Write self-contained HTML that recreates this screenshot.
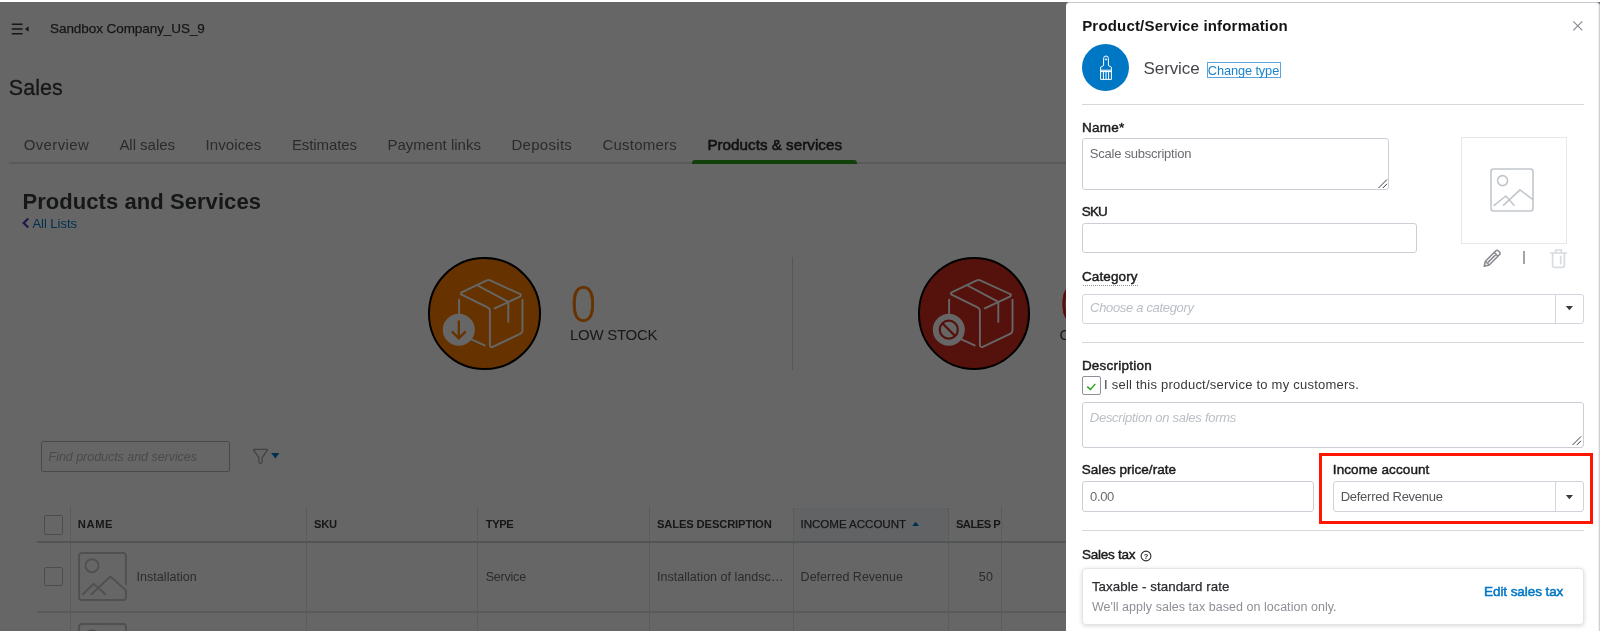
<!DOCTYPE html>
<html lang="en">
<head>
<meta charset="utf-8">
<title>Products and Services</title>
<style>
*{box-sizing:border-box;margin:0;padding:0}
html,body{width:1600px;height:631px;overflow:hidden;background:#fff}
body{position:relative;font-family:"Liberation Sans",sans-serif}
.layer{position:absolute;left:0;top:0;width:1600px;height:631px;overflow:hidden;will-change:transform}
.a{position:absolute;display:block}
.t{position:absolute;white-space:nowrap;display:block}
#overlay{position:absolute;left:0;top:2px;width:1600px;height:629px;background:rgba(0,0,0,.6)}
#panelbg{position:absolute;left:1066px;top:2px;width:534px;height:640px;background:#fff;border-top:1px solid #c6cacf;border-right:1px solid #cdd0d5;box-shadow:inset -1px 0 0 #eff0f2;border-radius:4px 4px 0 0}
.vd{position:absolute;top:508px;height:130px;width:0;border-left:1px dotted #cdd0d5}
.hl{position:absolute;background:#d4d7dc}
.inp{position:absolute;border:1px solid #cbcfd5;border-radius:3px;background:#fff}
.cb{position:absolute;width:19px;height:20px;border:1px solid #babec5;border-radius:2px;background:#fff}
</style>
</head>
<body>
<!-- ================= underlying page ================= -->
<div class="layer" id="page">
  <!-- nav toggle -->
  <svg class="a" style="left:10px;top:20px" width="22" height="18" viewBox="0 0 22 18">
    <g stroke="#393a3d" stroke-width="1.4" fill="none"><path d="M1.8 4.2h10.8M1.8 9h10.8M1.8 13.8h10.8"/></g>
    <path d="M18.6 6.2v5.6L15 9z" fill="#393a3d"/>
  </svg>
  <!-- tab rule + selected bar -->
  <div class="hl" style="left:9px;top:162px;width:1591px;height:2px;background:#dfe2e6"></div>
  <div class="a" style="left:692px;top:160px;width:165px;height:4px;background:#2ca01c;border-radius:3px 3px 0 0"></div>
  <!-- all lists chevron -->
  <svg class="a" style="left:21px;top:217px" width="10" height="12" viewBox="0 0 10 12"><path d="M7.3 1.6L2.6 6l4.7 4.4" fill="none" stroke="#3a3ab8" stroke-width="2"/></svg>

  <!-- low stock circle -->
  <div class="a" style="left:428px;top:257px;width:112.5px;height:112.5px;border-radius:50%;background:#ff8000;border:2px solid #000"></div>
  <svg class="a" style="left:428.2px;top:257.2px" width="112" height="112" viewBox="0 0 112 112">
    <g fill="none" stroke="#fff" stroke-width="1.9" stroke-linecap="round" stroke-linejoin="round">
      <path d="M66.7 51.3L92 39.6a1.4 1.4 0 0 0 0-2.6L62.2 23.4a4 4 0 0 0-3.4 0L33.6 35.4a1.2 1.2 0 0 0 0 2.2L59.6 50.4a4 4 0 0 1 2.3 3.6V88a2 2 0 0 0 2.9 1.9L92.6 76.6a3.4 3.4 0 0 0 1.9-3V42.8"/>
      <path d="M49.6 28.5L80.3 44.9V64.9"/>
      <path d="M31.1 42.8V56.5"/>
      <path d="M43.9 82.7L56.7 88.4"/>
    </g>
    <circle cx="30.8" cy="72.7" r="16" fill="#fff"/>
    <path d="M30.8 63.4V81M23.9 74.4l6.9 6.9 6.9-6.9" fill="none" stroke="#ff8000" stroke-width="2.3"/>
  </svg>
  <div class="hl" style="left:792px;top:257px;width:1px;height:113px"></div>
  <!-- out of stock circle -->
  <div class="a" style="left:917.8px;top:257px;width:112.5px;height:112.5px;border-radius:50%;background:#d52b1e;border:2px solid #000"></div>
  <svg class="a" style="left:918px;top:257.2px" width="112" height="112" viewBox="0 0 112 112">
    <g fill="none" stroke="#fff" stroke-width="1.9" stroke-linecap="round" stroke-linejoin="round">
      <path d="M66.7 51.3L92 39.6a1.4 1.4 0 0 0 0-2.6L62.2 23.4a4 4 0 0 0-3.4 0L33.6 35.4a1.2 1.2 0 0 0 0 2.2L59.6 50.4a4 4 0 0 1 2.3 3.6V88a2 2 0 0 0 2.9 1.9L92.6 76.6a3.4 3.4 0 0 0 1.9-3V42.8"/>
      <path d="M49.6 28.5L80.3 44.9V64.9"/>
      <path d="M31.1 42.8V56.5"/>
      <path d="M43.9 82.7L56.7 88.4"/>
    </g>
    <circle cx="30.8" cy="72.7" r="16" fill="#fff"/>
    <circle cx="30.8" cy="72.7" r="9" fill="none" stroke="#d52b1e" stroke-width="2.2"/>
    <path d="M24.4 66.3l12.8 12.8" stroke="#d52b1e" stroke-width="2.2"/>
  </svg>

  <!-- search + filter -->
  <div class="a" style="left:40.5px;top:441px;width:189.5px;height:31px;border:1px solid #b2b6bc;border-radius:2px"></div>
  <svg class="a" style="left:251px;top:446.300px" width="32" height="20" viewBox="0 0 32 20">
    <path d="M3.200 3.300h12.600a0.600 0.600 0 0 1 0.500 0.950L11.100 11.700v4a1.600 1.600 0 0 1-3.200 0v-4L2.700 4.250a0.600 0.600 0 0 1 0.500-0.950z" fill="none" stroke="#a6a9af" stroke-width="1.350" stroke-linejoin="round"/>
    <path d="M20.200 7.100h8.200l-4.100 5.300z" fill="#0079c8"/>
  </svg>

  <!-- table -->
  <div class="a" style="left:794px;top:508px;width:155px;height:33px;background:#f6f7f9"></div>
  <div class="vd" style="left:70px"></div>
  <div class="vd" style="left:306px"></div>
  <div class="vd" style="left:477px"></div>
  <div class="vd" style="left:649px"></div>
  <div class="vd" style="left:793px"></div>
  <div class="vd" style="left:948px"></div>
  <div class="vd" style="left:1001px"></div>
  <div class="a" style="left:37px;top:541px;width:1563px;height:2px;background:#cfd3d8"></div>
  <div class="a" style="left:37px;top:611px;width:1563px;height:2px;background:#dfe2e6"></div>
  <div class="cb" style="left:44px;top:515px"></div>
  <div class="cb" style="left:44px;top:567px;height:19px"></div>
  <svg class="a" style="left:912px;top:521px" width="8" height="6" viewBox="0 0 8 6"><path d="M0.2 5L3.6 0.8 7 5z" fill="#0077c5"/></svg>
  <!-- row thumbnails -->
  <svg class="a" style="left:78px;top:552px" width="49" height="49" viewBox="0 0 49 49">
    <g fill="none" stroke="#c3c7ce" stroke-width="1.9" stroke-linejoin="round" stroke-linecap="round">
      <path d="M47.9 32.400V3.600a2.600 2.600 0 0 0-2.600-2.600H3.700a2.600 2.600 0 0 0-2.600 2.600v41.800a2.600 2.600 0 0 0 2.600 2.600h41.600a2.600 2.600 0 0 0 2.600-2.600V38.400"/>
      <circle cx="14" cy="13.700" r="6.500"/>
      <path d="M4.800 42.200L15.700 31.700l11.600 10.500M13.400 42.200L32.400 24.500l15.500 13.900"/>
    </g>
  </svg>
  <svg class="a" style="left:78px;top:622.500px" width="49" height="49" viewBox="0 0 49 49">
    <g fill="none" stroke="#c3c7ce" stroke-width="1.9" stroke-linejoin="round" stroke-linecap="round">
      <path d="M47.9 32.400V3.600a2.600 2.600 0 0 0-2.600-2.600H3.700a2.600 2.600 0 0 0-2.600 2.600v41.800a2.600 2.600 0 0 0 2.600 2.600h41.600a2.600 2.600 0 0 0 2.600-2.600V38.400"/>
      <circle cx="14" cy="13.700" r="6.500"/>
    </g>
  </svg>
<span class="t" id="co" style="left:50.00px;top:22.40px;font-size:13.5px;line-height:13.5px;color:#393a3d;letter-spacing:-0.067px;-webkit-text-stroke:0.25px #393a3d;">Sandbox Company_US_9</span>
<span class="t" id="sales" style="left:8.80px;top:77.61px;font-size:21.5px;line-height:21.5px;color:#393a3d;letter-spacing:0.045px;-webkit-text-stroke:0.3px #393a3d;">Sales</span>
<span class="t" id="tab0" style="left:23.65px;top:137.01px;font-size:15px;line-height:15px;color:#6b6c72;letter-spacing:0.378px;">Overview</span>
<span class="t" id="tab1" style="left:119.40px;top:137.01px;font-size:15px;line-height:15px;color:#6b6c72;letter-spacing:-0.031px;">All sales</span>
<span class="t" id="tab2" style="left:205.40px;top:137.01px;font-size:15px;line-height:15px;color:#6b6c72;letter-spacing:0.116px;">Invoices</span>
<span class="t" id="tab3" style="left:291.90px;top:137.01px;font-size:15px;line-height:15px;color:#6b6c72;letter-spacing:-0.089px;">Estimates</span>
<span class="t" id="tab4" style="left:387.40px;top:137.01px;font-size:15px;line-height:15px;color:#6b6c72;letter-spacing:0.018px;">Payment links</span>
<span class="t" id="tab5" style="left:511.40px;top:137.01px;font-size:15px;line-height:15px;color:#6b6c72;letter-spacing:0.299px;">Deposits</span>
<span class="t" id="tab6" style="left:602.40px;top:137.01px;font-size:15px;line-height:15px;color:#6b6c72;letter-spacing:0.243px;">Customers</span>
<span class="t" id="tabsel" style="left:707.40px;top:137.01px;font-size:15.2px;line-height:15.2px;color:#2b2c2f;letter-spacing:0.021px;-webkit-text-stroke:0.55px #2b2c2f;">Products &amp; services</span>
<span class="t" id="h1" style="left:22.40px;top:191.00px;font-size:22px;line-height:22px;color:#393a3d;font-weight:700;letter-spacing:0.067px;">Products and Services</span>
<span class="t" id="alllists" style="left:32.40px;top:216.50px;font-size:13px;line-height:13px;color:#0077c5;letter-spacing:-0.023px;">All Lists</span>
<span class="t" id="zero1" style="left:569.10px;top:282.71px;font-size:45.5px;line-height:45.5px;color:#ff8000;letter-spacing:0.000px;-webkit-text-stroke:0.8px #ff8000;font-family:DejaVu Sans Light,DejaVu Sans,sans-serif;font-weight:200;">0</span>
<span class="t" id="low" style="left:570.00px;top:326.70px;font-size:15px;line-height:15px;color:#3f4044;letter-spacing:-0.276px;">LOW STOCK</span>
<span class="t" id="zero2" style="left:1058.70px;top:282.71px;font-size:45.5px;line-height:45.5px;color:#d52b1e;letter-spacing:0.000px;-webkit-text-stroke:0.8px #d52b1e;font-family:DejaVu Sans Light,DejaVu Sans,sans-serif;font-weight:200;">0</span>
<span class="t" id="out" style="left:1059.60px;top:326.70px;font-size:15px;line-height:15px;color:#3f4044;letter-spacing:-0.136px;">OUT OF STOCK</span>
<span class="t" id="find" style="left:48.60px;top:450.51px;font-size:12.5px;line-height:12.5px;color:#b4b8be;font-style:italic;letter-spacing:-0.039px;">Find products and services</span>
<span class="t" id="thname" style="left:77.80px;top:519.00px;font-size:11.2px;line-height:11.2px;color:#393a3d;font-weight:700;letter-spacing:0.585px;">NAME</span>
<span class="t" id="thsku" style="left:314.00px;top:519.00px;font-size:11.2px;line-height:11.2px;color:#393a3d;font-weight:700;letter-spacing:-0.250px;">SKU</span>
<span class="t" id="thtype" style="left:485.70px;top:519.00px;font-size:11.2px;line-height:11.2px;color:#393a3d;font-weight:700;letter-spacing:-0.381px;">TYPE</span>
<span class="t" id="thdesc" style="left:657.00px;top:519.00px;font-size:11.2px;line-height:11.2px;color:#393a3d;font-weight:700;letter-spacing:-0.132px;">SALES DESCRIPTION</span>
<span class="t" id="thinc" style="left:800.60px;top:518.01px;font-size:11.6px;line-height:11.6px;color:#393a3d;letter-spacing:-0.065px;-webkit-text-stroke:0.25px #393a3d;">INCOME ACCOUNT</span>
<span class="t" id="thsp" style="left:955.90px;top:519.00px;font-size:11.2px;line-height:11.2px;color:#393a3d;font-weight:700;letter-spacing:-0.504px;">SALES P</span>
<span class="t" id="r1name" style="left:136.50px;top:571.10px;font-size:12.5px;line-height:12.5px;color:#6b6c72;letter-spacing:0.046px;">Installation</span>
<span class="t" id="r1type" style="left:485.70px;top:571.01px;font-size:12.5px;line-height:12.5px;color:#6b6c72;letter-spacing:-0.213px;">Service</span>
<span class="t" id="r1desc" style="left:657.00px;top:571.01px;font-size:12.5px;line-height:12.5px;color:#6b6c72;letter-spacing:0.028px;">Installation of landsc…</span>
<span class="t" id="r1inc" style="left:800.60px;top:571.01px;font-size:12.5px;line-height:12.5px;color:#6b6c72;letter-spacing:0.016px;">Deferred Revenue</span>
<span class="t" id="r1p" style="left:978.70px;top:571.01px;font-size:12.5px;line-height:12.5px;color:#6b6c72;letter-spacing:0.396px;">50</span>
</div>

<!-- ================= dimming overlay ================= -->
<div id="overlay"></div>

<!-- ================= slide-in panel ================= -->
<div id="panelbg"></div>
<div class="layer" id="panel">
  <!-- close -->
  <svg class="a" style="left:1572px;top:20px" width="12" height="12" viewBox="0 0 12 12"><path d="M1.3 1.3l9 9M10.3 1.3l-9 9" stroke="#85888e" stroke-width="1.15" fill="none"/></svg>
  <!-- service badge -->
  <div class="a" style="left:1082px;top:44px;width:47.4px;height:47.4px;border-radius:50%;background:#0077c5"></div>
  <svg class="a" style="left:1098.2px;top:54.1px" width="16" height="28" viewBox="0 0 16 28">
    <g fill="none" stroke="#fff" stroke-width="1" stroke-linejoin="round">
      <path d="M5.6 11.6V4.4a2.4 2.4 0 0 1 4.8 0v7.2l3 1.6v12.2H2.6V13.200z"/>
      <path d="M2.6 17.6h10.800M5.4 17.800v7.400M8 17.800v7.400M10.600 17.800v7.400"/>
      <circle cx="8" cy="5.400" r="0.700"/>
    </g>
    <rect x="3" y="15.600" width="10" height="2.200" fill="#fff" opacity=".75"/>
  </svg>
  <div class="a" style="left:1207px;top:62px;width:74px;height:16px;border:1px solid #5aa5de"></div>
  <div class="hl" style="left:1082px;top:103.500px;width:501.500px;height:1px;background:#d4d7dc"></div>

  <!-- name / sku -->
  <div class="inp" style="left:1082px;top:138px;width:307px;height:52px"></div>
  <svg class="a" style="left:1377px;top:178px" width="11" height="11" viewBox="0 0 11 11"><path d="M1.500 10L10 1.500M5.800 10L10 5.800" stroke="#393a3d" stroke-width="1" fill="none"/></svg>
  <div class="inp" style="left:1082px;top:222.500px;width:334.500px;height:30.500px"></div>
  <!-- image picker -->
  <div class="a" style="left:1461px;top:137px;width:106px;height:107px;border:1px solid #e6e8eb"></div>
  <svg class="a" style="left:1490px;top:168.300px" width="44" height="44" viewBox="0 0 44 44">
    <g fill="none" stroke="#c2c6cc" stroke-width="1.600" stroke-linejoin="round" stroke-linecap="round">
      <rect x="1" y="1" width="42" height="42" rx="2.500"/>
      <circle cx="12.600" cy="12.600" r="5"/>
      <path d="M4.200 37.400L15.800 28l8.200 9.200M13.600 37.200L30 21.800l12.600 9.600"/>
    </g>
  </svg>
  <svg class="a" style="left:1482px;top:249px" width="20" height="19" viewBox="0 0 20 19">
    <g fill="none" stroke="#87898f" stroke-width="1.500" stroke-linejoin="round">
      <path d="M2.200 17.200l1.200-5L13.600 2a2 2 0 0 1 2.800 0l1 1a2 2 0 0 1 0 2.800L7.200 16z"/>
      <path d="M3.400 12.200l3.800 3.800M12.200 3.400l3.800 3.800M6 13.400l8-8"/>
    </g>
  </svg>
  <div class="a" style="left:1523px;top:251px;width:2px;height:13px;background:#a3a4a8"></div>
  <svg class="a" style="left:1549px;top:248px" width="19" height="21" viewBox="0 0 19 21">
    <g fill="none" stroke="#d8dbe0" stroke-width="1.700" stroke-linejoin="round" stroke-linecap="round">
      <path d="M1.600 5h15.800M6.600 4.600V2h5.800v2.600M3.600 5.200v12.600a1.600 1.600 0 0 0 1.600 1.600h8.600a1.600 1.600 0 0 0 1.600-1.600V5.200M11.700 8.600v7"/>
    </g>
  </svg>
  <!-- category -->
  <div class="a" style="left:1082.500px;top:284.500px;width:55px;height:0;border-top:1px dotted #8d9096"></div>
  <div class="inp" style="left:1082px;top:293.500px;width:501.500px;height:30px;border-color:#d3d6dc"></div>
  <div class="a" style="left:1555px;top:294px;width:1px;height:29px;background:#d3d6dc"></div>
  <svg class="a" style="left:1565px;top:305px" width="9" height="6" viewBox="0 0 9 6"><path d="M0.800 1h7.200L4.400 5.200z" fill="#393a3d"/></svg>
  <div class="hl" style="left:1082px;top:342px;width:501.500px;height:1px;background:#d4d7dc"></div>

  <!-- description -->
  <div class="cb" style="left:1082px;top:376px;height:19px;border-color:#8d9096"></div>
  <svg class="a" style="left:1086px;top:381px" width="11" height="10" viewBox="0 0 11 10"><path d="M1.2 5.600l3.300 2.800L9.300 2.900" fill="none" stroke="#2ca01c" stroke-width="1.400"/></svg>
  <div class="inp" style="left:1082px;top:402px;width:501.500px;height:45.500px"></div>
  <svg class="a" style="left:1571px;top:435px" width="11" height="11" viewBox="0 0 11 11"><path d="M1.500 10L10 1.500M5.800 10L10 5.800" stroke="#393a3d" stroke-width="1" fill="none"/></svg>

  <!-- price / income -->
  <div class="inp" style="left:1082px;top:481px;width:231.500px;height:30.500px"></div>
  <div class="a" style="left:1319px;top:453px;width:274px;height:71px;border:3px solid #ff1600"></div>
  <div class="inp" style="left:1333px;top:481px;width:250.500px;height:30.500px;border-color:#d0d3d9"></div>
  <div class="a" style="left:1555px;top:481.500px;width:1px;height:29.500px;background:#d3d6dc"></div>
  <svg class="a" style="left:1565px;top:493.500px" width="9" height="6" viewBox="0 0 9 6"><path d="M0.800 1h7.200L4.400 5.200z" fill="#393a3d"/></svg>
  <div class="hl" style="left:1082px;top:530px;width:501.500px;height:1px;background:#d4d7dc"></div>

  <!-- sales tax -->
  <svg class="a" style="left:1140px;top:550.200px" width="12" height="12" viewBox="0 0 12 12"><circle cx="6" cy="6" r="4.900" fill="none" stroke="#2b2c2f" stroke-width="1.100"/><text x="6" y="8.600" font-size="7.500" font-weight="700" font-family="Liberation Sans, sans-serif" text-anchor="middle" fill="#2b2c2f">?</text></svg>
  <div class="a" style="left:1082px;top:567.500px;width:501.500px;height:57.500px;border:1px solid #e3e5e8;border-radius:4px;box-shadow:0 1px 4px rgba(0,0,0,.16);background:#fff"></div>
<span class="t" id="ptitle" style="left:1082.20px;top:18.01px;font-size:15px;line-height:15px;color:#151517;font-weight:700;letter-spacing:0.178px;">Product/Service information</span>
<span class="t" id="svc" style="left:1143.60px;top:60.30px;font-size:17px;line-height:17px;color:#45464a;letter-spacing:-0.106px;">Service</span>
<span class="t" id="chg" style="left:1207.80px;top:64.51px;font-size:12.8px;line-height:12.8px;color:#1a84d0;letter-spacing:-0.112px;">Change type</span>
<span class="t" id="lname" style="left:1081.90px;top:120.90px;font-size:13.5px;line-height:13.5px;color:#1c1c1e;letter-spacing:0.297px;-webkit-text-stroke:0.45px #1c1c1e;">Name*</span>
<span class="t" id="vname" style="left:1089.80px;top:147.40px;font-size:13px;line-height:13px;color:#6b6c72;letter-spacing:-0.231px;">Scale subscription</span>
<span class="t" id="lsku" style="left:1081.70px;top:205.01px;font-size:13.5px;line-height:13.5px;color:#1c1c1e;letter-spacing:-0.786px;-webkit-text-stroke:0.45px #1c1c1e;">SKU</span>
<span class="t" id="lcat" style="left:1081.90px;top:270.01px;font-size:13.5px;line-height:13.5px;color:#1c1c1e;letter-spacing:0.136px;-webkit-text-stroke:0.45px #1c1c1e;">Category</span>
<span class="t" id="vcat" style="left:1090.10px;top:301.21px;font-size:13px;line-height:13px;color:#babec5;font-style:italic;letter-spacing:-0.329px;">Choose a category</span>
<span class="t" id="ldesc" style="left:1081.90px;top:358.81px;font-size:13.5px;line-height:13.5px;color:#1c1c1e;letter-spacing:0.226px;-webkit-text-stroke:0.45px #1c1c1e;">Description</span>
<span class="t" id="isell" style="left:1104.00px;top:378.00px;font-size:13px;line-height:13px;color:#393a3d;letter-spacing:0.232px;">I sell this product/service to my customers.</span>
<span class="t" id="vdesc" style="left:1089.80px;top:411.00px;font-size:13px;line-height:13px;color:#babec5;font-style:italic;letter-spacing:-0.264px;">Description on sales forms</span>
<span class="t" id="lprice" style="left:1081.80px;top:463.12px;font-size:13.5px;line-height:13.5px;color:#1c1c1e;letter-spacing:0.026px;-webkit-text-stroke:0.45px #1c1c1e;">Sales price/rate</span>
<span class="t" id="vprice" style="left:1090.00px;top:489.71px;font-size:13px;line-height:13px;color:#6b6c72;letter-spacing:-0.318px;">0.00</span>
<span class="t" id="linc" style="left:1332.80px;top:463.21px;font-size:13.5px;line-height:13.5px;color:#1c1c1e;letter-spacing:0.095px;-webkit-text-stroke:0.45px #1c1c1e;">Income account</span>
<span class="t" id="vinc" style="left:1340.65px;top:490.00px;font-size:13px;line-height:13px;color:#55565a;letter-spacing:-0.257px;">Deferred Revenue</span>
<span class="t" id="ltax" style="left:1081.90px;top:547.62px;font-size:13.5px;line-height:13.5px;color:#1c1c1e;letter-spacing:-0.239px;-webkit-text-stroke:0.45px #1c1c1e;">Sales tax</span>
<span class="t" id="taxable" style="left:1091.90px;top:580.31px;font-size:13.3px;line-height:13.3px;color:#2b2c2f;letter-spacing:0.070px;-webkit-text-stroke:0.25px #2b2c2f;">Taxable - standard rate</span>
<span class="t" id="well" style="left:1091.90px;top:600.60px;font-size:12.5px;line-height:12.5px;color:#8d9096;letter-spacing:0.037px;">We'll apply sales tax based on location only.</span>
<span class="t" id="edit" style="left:1484.10px;top:585.21px;font-size:13.5px;line-height:13.5px;color:#0077c5;letter-spacing:-0.081px;-webkit-text-stroke:0.5px #0077c5;">Edit sales tax</span>
</div>
</body>
</html>
